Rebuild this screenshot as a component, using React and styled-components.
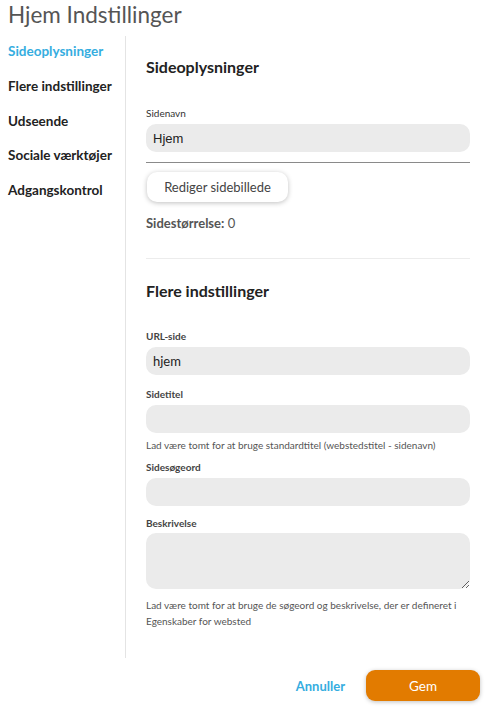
import React from "react";
import styled, { createGlobalStyle } from "styled-components";

const Global = createGlobalStyle`
  html, body { margin: 0; padding: 0; background: #fff; }
  body { font-family: Lato, "Open Sans", sans-serif; color: #333; }
  * { box-sizing: border-box; }
`;

const Page = styled.div`
  width: 486px;
  height: 707px;
  overflow: hidden;
`;

const Title = styled.h1`
  margin: 0;
  padding-left: 8px;
  font-size: 22.5px;
  line-height: 29px;
  font-weight: 400;
  color: #555;
`;

const Row = styled.div`
  display: flex;
  margin-top: 5px;
`;

const Sidebar = styled.nav`
  width: 125px;
  flex: none;
  display: flex;
  flex-direction: column;
`;

const NavItem = styled.div`
  padding-left: 8px;
  height: 34.75px;
  line-height: 34.75px;
  font-size: 13.5px;
  font-weight: 700;
  color: ${(p) => (p.$active ? "#35ade0" : "#222")};
  white-space: nowrap;
`;

const Main = styled.main`
  flex: 1;
  margin-top: 2px;
  border-left: 1px solid #e4e4e4;
  padding: 21px 16px 29px 20px;
  display: flex;
  flex-direction: column;
`;

const Heading = styled.h2`
  margin: 0 0 ${(p) => p.$after}px;
  font-size: 16px;
  line-height: 20px;
  font-weight: 700;
  color: #222;
`;

const Label = styled.label`
  display: block;
  font-size: 10px;
  line-height: 14px;
  font-weight: ${(p) => (p.$light ? 400 : 700)};
  color: ${(p) => (p.$light ? "#333" : "#444")};
  margin-bottom: ${(p) => p.$gap ?? 4}px;
`;

const Input = styled.input`
  display: block;
  width: 100%;
  height: 28px;
  border: none;
  outline: none;
  border-radius: 10px;
  background: #ebebeb;
  padding: 0 7px;
  font-family: ${(p) => (p.$arial ? '"Liberation Sans", Arial, sans-serif' : 'Lato, sans-serif')};
  font-size: 13px;
  color: #222;
  margin-bottom: ${(p) => p.$after ?? 0}px;
`;

const TextArea = styled.textarea`
  display: block;
  width: 100%;
  height: 56px;
  border: none;
  outline: none;
  border-radius: 10px;
  background: #ebebeb;
  padding: 6px 7px;
  font-family: Lato, sans-serif;
  font-size: 13px;
  resize: vertical;
  margin: 0;
`;

const Rule = styled.div`
  height: 1px;
  background: ${(p) => p.$color};
  margin: ${(p) => p.$margin};
`;

const GhostButton = styled.button`
  align-self: flex-start;
  height: 30px;
  width: 141px;
  margin-left: 1px;
  border: none;
  border-radius: 10px;
  background: #fff;
  box-shadow: 0 1px 5px rgba(0, 0, 0, 0.25);
  font-family: Lato, sans-serif;
  font-size: 13px;
  color: #444;
  cursor: pointer;
`;

const SizeLine = styled.div`
  margin-top: 13px;
  font-size: 13px;
  line-height: 16px;
  color: #555;
  b { font-weight: 700; }
`;

const Help = styled.p`
  margin: ${(p) => p.$margin};
  font-size: 10px;
  line-height: ${(p) => p.$lh ?? 14}px;
  color: #555;
`;

const Footer = styled.div`
  display: flex;
  justify-content: flex-end;
  align-items: center;
  gap: 21px;
  padding-right: 6px;
  margin-top: 12px;
`;

const LinkButton = styled.button`
  border: none;
  background: none;
  padding: 0;
  font-family: Lato, sans-serif;
  font-size: 13px;
  font-weight: 700;
  color: #35ade0;
  cursor: pointer;
`;

const PrimaryButton = styled.button`
  width: 114px;
  height: 31px;
  border: none;
  border-radius: 9px;
  background: #e27b00;
  box-shadow: 0 1px 4px rgba(0, 0, 0, 0.25);
  font-family: Lato, sans-serif;
  font-size: 13.5px;
  color: #fff;
  cursor: pointer;
`;

const navItems = [
  "Sideoplysninger",
  "Flere indstillinger",
  "Udseende",
  "Sociale værktøjer",
  "Adgangskontrol",
];

export default function App() {
  return (
    <Page>
      <Global />
      <Title>Hjem Indstillinger</Title>
      <Row>
        <Sidebar>
          {navItems.map((n, i) => (
            <NavItem key={n} $active={i === 0}>{n}</NavItem>
          ))}
        </Sidebar>
        <Main>
          <Heading $after={29}>Sideoplysninger</Heading>
          <Label $light>Sidenavn</Label>
          <Input $arial defaultValue="Hjem" />
          <Rule $color="#8a8a8a" $margin="10px 0 9px" />
          <GhostButton>Rediger sidebillede</GhostButton>
          <SizeLine><b>Sidestørrelse:</b> 0</SizeLine>
          <Rule $color="#ececec" $margin="27px 0 22px" />
          <Heading $after={28}>Flere indstillinger</Heading>
          <Label>URL-side</Label>
          <Input defaultValue="hjem" $after={12} />
          <Label>Sidetitel</Label>
          <Input />
          <Help $margin="5px 0 8px">Lad være tomt for at bruge standardtitel (webstedstitel - sidenavn)</Help>
          <Label>Sidesøgeord</Label>
          <Input $after={10} />
          <Label $gap={3}>Beskrivelse</Label>
          <TextArea />
          <Help $margin="8px 0 0" $lh={16}>
            Lad være tomt for at bruge de søgeord og beskrivelse, der er defineret i Egenskaber for websted
          </Help>
        </Main>
      </Row>
      <Footer>
        <LinkButton>Annuller</LinkButton>
        <PrimaryButton>Gem</PrimaryButton>
      </Footer>
    </Page>
  );
}
